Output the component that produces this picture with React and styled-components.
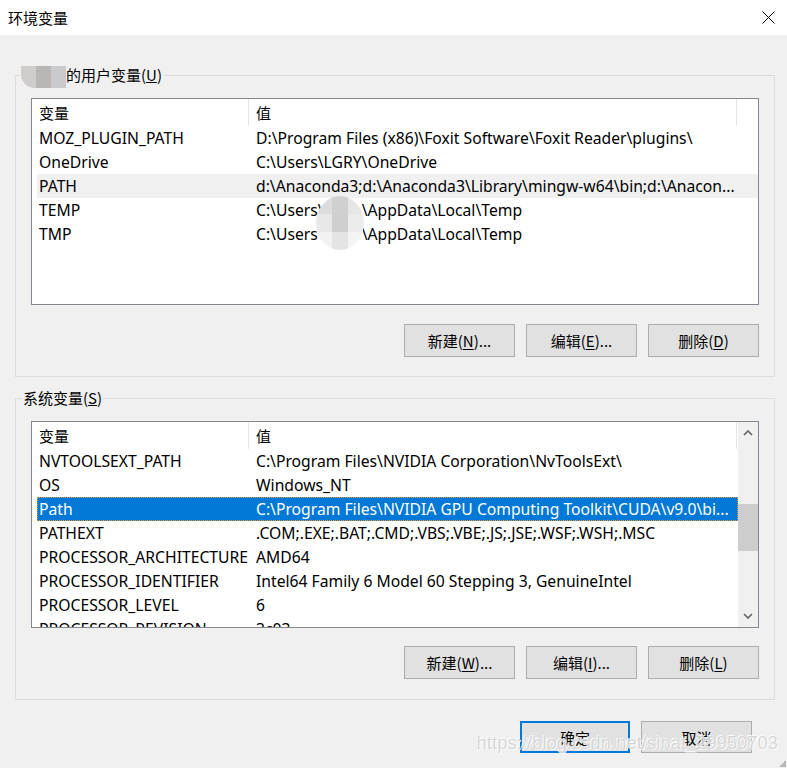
import styled, { createGlobalStyle } from "styled-components";

const GlobalStyle = createGlobalStyle`
  html, body {
    margin: 0;
    padding: 0;
    background: #f0f0f0;
  }
  body {
    font-family: "Noto Sans", "Noto Sans CJK SC", sans-serif;
    font-size: 15.7px;
    color: #000;
  }
`;

const Window = styled.div`
  position: relative;
  width: 787px;
  height: 768px;
  overflow: hidden;
  background: #f0f0f0;
  display: flex;
  flex-direction: column;
`;

const TitleBar = styled.div`
  height: 35px;
  flex: none;
  background: #fff;
  display: flex;
  align-items: center;
  justify-content: space-between;
  padding: 0 12px 0 8px;
  font-size: 15px;
  font-family: "Noto Sans CJK SC", sans-serif;
`;

const Body = styled.div`
  display: flex;
  flex-direction: column;
  padding: 0 12px 0 15px;
`;

const Group = styled.fieldset`
  margin: ${(p) => p.$top}px 0 0 0;
  padding: 13px 15px ${(p) => p.$bottom}px 15px;
  border: 1px solid #dcdcdc;
  min-width: 0;
  display: flex;
  flex-direction: column;
`;

const Legend = styled.legend`
  margin-left: ${(p) => p.$indent}px;
  padding: 0 1px;
  height: 20px;
  line-height: 20px;
  display: flex;
  align-items: center;
  font-size: 15px;
  font-family: "Noto Sans CJK SC", sans-serif;
`;

const BlurName = styled.span`
  display: inline-flex;
  width: 45px;
  height: 22px;
  margin-top: 4px;
  border-bottom-left-radius: 14px;
  overflow: hidden;
  span {
    flex: 1;
  }
  span:nth-child(1) { background: #cfcccc; }
  span:nth-child(2) { background: #bab6b5; }
  span:nth-child(3) { background: #cacacd; }
`;

const List = styled.div`
  position: relative;
  height: 207px;
  box-sizing: border-box;
  border: 1px solid #828790;
  background: #fff;
  overflow: hidden;
  display: flex;
`;

const ListBody = styled.div`
  flex: 1;
  min-width: 0;
  padding-left: 5px;
`;

const Row = styled.div`
  display: grid;
  grid-template-columns: 212px 488px;
  height: ${(p) => (p.$header ? 27 : 24)}px;
  align-items: center;
  white-space: nowrap;
  box-sizing: border-box;
  background: ${(p) => (p.$selected ? "#0078d7" : p.$hover ? "#f0f0f0" : "transparent")};
  color: ${(p) => (p.$selected ? "#fff" : "#000")};
  outline: ${(p) => (p.$selected ? "1px dotted #f39b2a" : "none")};
  outline-offset: -1px;
`;

const Cell = styled.div`
  overflow: hidden;
  padding-left: ${(p) => (p.$value ? 7 : 2)}px;
  height: 100%;
  display: flex;
  align-items: center;
  box-sizing: border-box;
  border-right: ${(p) => (p.$header ? "1px solid #e5e5e5" : "none")};
  font-size: ${(p) => (p.$header ? "15px" : "inherit")};
  font-family: ${(p) =>
    p.$header ? '"Noto Sans CJK SC", sans-serif' : "inherit"};
`;

const Hidden = styled.span`
  display: inline-block;
  width: 38px;
`;

const Smudge = styled.div`
  position: absolute;
  left: 284px;
  top: 97px;
  width: 48px;
  height: 54px;
  border-radius: 50%;
  overflow: hidden;
  display: grid;
  grid-template-columns: 1fr 1fr 1fr;
  grid-template-rows: 1fr 1fr 1fr;
  span:nth-child(1) { background: #dcdcdc; }
  span:nth-child(2) { background: #d0d0d0; }
  span:nth-child(3) { background: #e6e6e6; }
  span:nth-child(4) { background: #e8e8e8; }
  span:nth-child(5) { background: #cfcfcf; }
  span:nth-child(6) { background: #ececec; }
  span:nth-child(7) { background: #f2f2f2; }
  span:nth-child(8) { background: #e4e4e4; }
  span:nth-child(9) { background: #f4f4f4; }
`;

const ScrollBar = styled.div`
  width: 20px;
  flex: none;
  background: #f0f0f0;
  display: flex;
  flex-direction: column;
  align-items: stretch;
`;

const Arrow = styled.div`
  height: 22px;
  display: flex;
  align-items: center;
  justify-content: center;
  flex: none;
`;

const Track = styled.div`
  flex: 1;
  padding-top: 60px;
`;

const Thumb = styled.div`
  height: 47px;
  background: #cdcdcd;
`;

const Buttons = styled.div`
  display: flex;
  justify-content: flex-end;
  gap: 11px;
  margin-top: ${(p) => p.$gap}px;
`;

const Button = styled.div`
  width: ${(p) => (p.$w ? p.$w : 111)}px;
  height: ${(p) => (p.$h ? p.$h : 33)}px;
  box-sizing: border-box;
  border: ${(p) => (p.$default ? "2px solid #0078d7" : "1px solid #adadad")};
  background: #e1e1e1;
  display: flex;
  align-items: center;
  justify-content: center;
  font-family: "Noto Sans CJK SC", sans-serif;
  font-size: 15px;
  u {
    text-underline-offset: 2px;
  }
`;

const Footer = styled.div`
  display: flex;
  justify-content: flex-end;
  gap: 11px;
  padding: 21px 35px 0 0;
`;

const Watermark = styled.div`
  position: absolute;
  right: 9px;
  bottom: 14px;
  font-family: "Liberation Sans", sans-serif;
  font-size: 18px;
  letter-spacing: 0.2px;
  color: rgba(195, 195, 195, 0.7);
  text-shadow: 0 0 1px #fff, 1px 1px 0 rgba(255,255,255,0.8), -1px -1px 0 rgba(255,255,255,0.8);
`;

const Grip = styled.svg`
  position: absolute;
  right: 1px;
  bottom: 1px;
`;

const userVars = [
  ["MOZ_PLUGIN_PATH", "D:\\Program Files (x86)\\Foxit Software\\Foxit Reader\\plugins\\"],
  ["OneDrive", "C:\\Users\\LGRY\\OneDrive"],
  ["PATH", "d:\\Anaconda3;d:\\Anaconda3\\Library\\mingw-w64\\bin;d:\\Anacon..."],
  ["TEMP", "temp"],
  ["TMP", "temp"],
];

const sysVars = [
  ["NVTOOLSEXT_PATH", "C:\\Program Files\\NVIDIA Corporation\\NvToolsExt\\"],
  ["OS", "Windows_NT"],
  ["Path", "C:\\Program Files\\NVIDIA GPU Computing Toolkit\\CUDA\\v9.0\\bi..."],
  ["PATHEXT", ".COM;.EXE;.BAT;.CMD;.VBS;.VBE;.JS;.JSE;.WSF;.WSH;.MSC"],
  ["PROCESSOR_ARCHITECTURE", "AMD64"],
  ["PROCESSOR_IDENTIFIER", "Intel64 Family 6 Model 60 Stepping 3, GenuineIntel"],
  ["PROCESSOR_LEVEL", "6"],
  ["PROCESSOR_REVISION", "3c03"],
];

function Value({ text }) {
  if (text === "temp") {
    return (
      <>
        C:\Users\<Hidden />\AppData\Local\Temp
      </>
    );
  }
  return text;
}

function VarList({ rows, hover, selected, scroll, smudge }) {
  return (
    <List>
      <ListBody>
        <Row $header>
          <Cell $header>变量</Cell>
          <Cell $header $value>
            值
          </Cell>
        </Row>
        {rows.map(([name, value]) => (
          <Row key={name} $hover={name === hover} $selected={name === selected}>
            <Cell>{name}</Cell>
            <Cell $value>
              <Value text={value} />
            </Cell>
          </Row>
        ))}
      </ListBody>
      {scroll && (
        <ScrollBar>
          <Arrow>
            <svg width="10" height="6" viewBox="0 0 10 6">
              <polyline points="1,5 5,1 9,5" fill="none" stroke="#606060" strokeWidth="1.6" />
            </svg>
          </Arrow>
          <Track>
            <Thumb />
          </Track>
          <Arrow>
            <svg width="10" height="6" viewBox="0 0 10 6">
              <polyline points="1,1 5,5 9,1" fill="none" stroke="#606060" strokeWidth="1.6" />
            </svg>
          </Arrow>
        </ScrollBar>
      )}
      {smudge && (
        <Smudge>
          {Array.from({ length: 9 }).map((_, i) => (
            <span key={i} />
          ))}
        </Smudge>
      )}
    </List>
  );
}

export default function App() {
  return (
    <Window>
      <GlobalStyle />
      <TitleBar>
        <span>环境变量</span>
        <svg width="13" height="13" viewBox="0 0 13 13">
          <path d="M0.5 0.5 L12.5 12.5 M12.5 0.5 L0.5 12.5" stroke="#000" strokeWidth="1" />
        </svg>
      </TitleBar>
      <Body>
        <Group $top={30} $bottom={19}>
          <Legend $indent={-11}>
            <BlurName>
              <span />
              <span />
              <span />
            </BlurName>
            的用户变量(<u>U</u>)
          </Legend>
          <VarList rows={userVars} hover="PATH" smudge />
          <Buttons $gap={19}>
            <Button>
              新建(<u>N</u>)...
            </Button>
            <Button>
              编辑(<u>E</u>)...
            </Button>
            <Button>
              删除(<u>D</u>)
            </Button>
          </Buttons>
        </Group>
        <Group $top={11} $bottom={20}>
          <Legend $indent={-9}>
            系统变量(<u>S</u>)
          </Legend>
          <VarList rows={sysVars} selected="Path" scroll />
          <Buttons $gap={18}>
            <Button>
              新建(<u>W</u>)...
            </Button>
            <Button>
              编辑(<u>I</u>)...
            </Button>
            <Button>
              删除(<u>L</u>)
            </Button>
          </Buttons>
        </Group>
      </Body>
      <Footer>
        <Button $default $w={110} $h={32}>
          确定
        </Button>
        <Button $w={111} $h={32}>
          取消
        </Button>
      </Footer>
      <Watermark>https://blog.csdn.net/sinat_29950703</Watermark>
      <Grip width="6" height="6" viewBox="0 0 6 6">
        <rect x="4" y="0" width="2" height="2" fill="#b8b8b8" />
        <rect x="2" y="2" width="2" height="2" fill="#b8b8b8" />
        <rect x="4" y="2" width="2" height="2" fill="#b8b8b8" />
        <rect x="0" y="4" width="2" height="2" fill="#b8b8b8" />
        <rect x="2" y="4" width="2" height="2" fill="#b8b8b8" />
        <rect x="4" y="4" width="2" height="2" fill="#b8b8b8" />
      </Grip>
    </Window>
  );
}
